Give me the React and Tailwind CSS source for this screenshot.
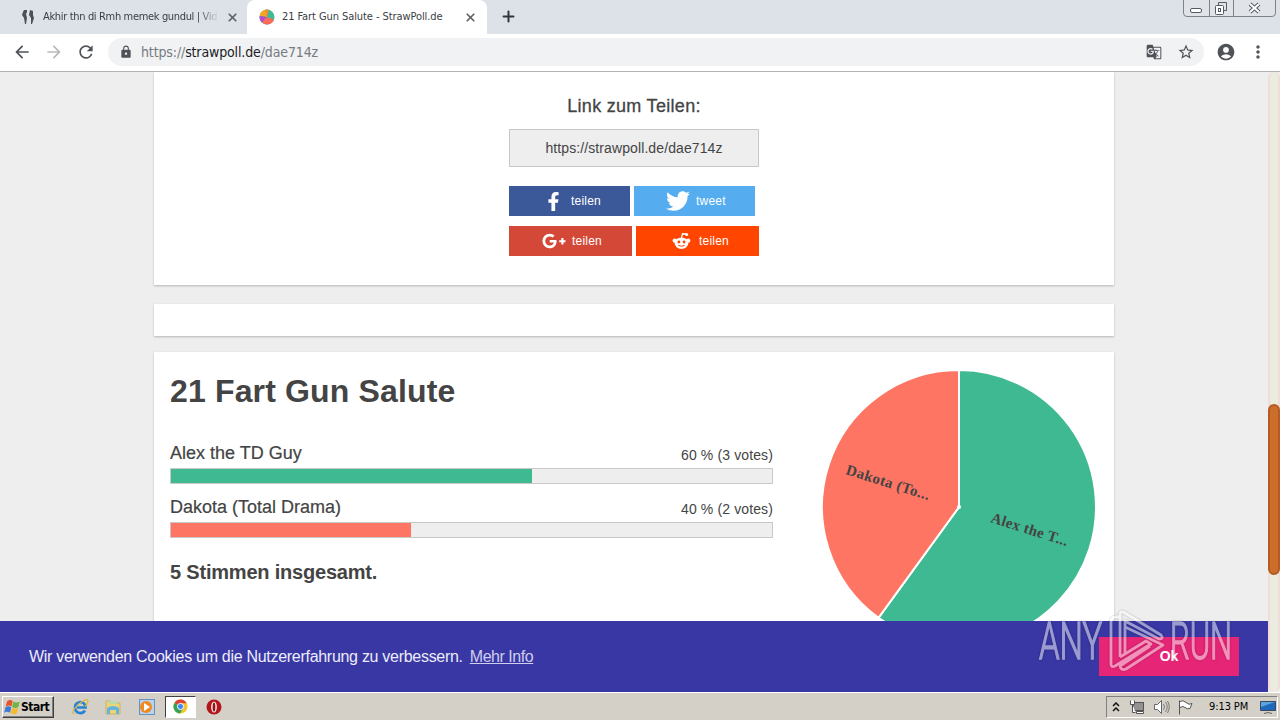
import React from "react";
import { X, Plus } from "lucide-react";
import { FaFacebookF, FaTwitter, FaGooglePlusG } from "react-icons/fa";
import { MdArrowBack, MdArrowForward, MdRefresh, MdLock, MdStarBorder, MdAccountCircle, MdMoreVert, MdGTranslate } from "react-icons/md";

const shareButtons = [
  { id: "fb", label: "teilen", Icon: FaFacebookF, size: 19, box: "w-[121px] bg-[#3b5998] pl-[33px]", iconBox: "w-[22px]", gap: "ml-[7px]" },
  { id: "tw", label: "tweet", Icon: FaTwitter, size: 24, box: "w-[121px] bg-[#55acee] pl-[32px]", iconBox: "w-[24px]", gap: "ml-[6px]" },
  { id: "gp", label: "teilen", Icon: FaGooglePlusG, size: 24, box: "w-[123px] bg-[#d34836] pl-[33px]", iconBox: "w-[24px]", gap: "ml-[6px]" },
  { id: "rd", label: "teilen", Icon: null, size: 19, box: "w-[123px] bg-[#ff4500] pl-[36px]", iconBox: "w-[19px]", gap: "ml-[8px]" },
];

const answers = [
  { name: "Alex the TD Guy", percent: 60, votes: 3, bar: "bg-[#3fb991]" },
  { name: "Dakota (Total Drama)", percent: 40, votes: 2, bar: "bg-[#fd7563]" },
];

const RedditIcon = () => (
  <svg width="19" height="18" viewBox="0 0 19 18" className="block">
    <path d="M9.5 6 10.5 1.800l3.500 .2" fill="none" stroke="#fff" strokeWidth="1.300" />
    <circle cx="14.600" cy="2.600" r="1.500" fill="#fff" />
    <circle cx="2.800" cy="8.600" r="2.200" fill="#fff" />
    <circle cx="16.200" cy="8.600" r="2.200" fill="#fff" />
    <ellipse cx="9.500" cy="11.200" rx="6.800" ry="5.800" fill="#fff" />
    <circle cx="6.900" cy="10" r="1.400" fill="#ff4500" />
    <circle cx="12.100" cy="10" r="1.400" fill="#ff4500" />
    <path d="M6.300 13.300q3.200 2 6.400 0" fill="none" stroke="#ff4500" strokeWidth="1" />
  </svg>
);

const WindowControls = () => (
  <svg width="94" height="18" viewBox="0 0 94 18" className="absolute right-[3px] top-0" fill="none">
    <path d="M.5 0v13q0 3.500 3.500 3.500h85q3.500 0 3.500-3.500V0" fill="#e0e3e8" stroke="#7d828b" />
    <path d="M26.500 0v16M50.500 0v16" stroke="#7d828b" />
    <rect x="7.500" y="8.500" width="11" height="4" rx="1.500" fill="#fff" stroke="#555b66" />
    <path d="M35.500 5.500v-3h8v8h-3" stroke="#555b66" />
    <rect x="32.500" y="5.500" width="8" height="9" rx="1" fill="#fff" stroke="#555b66" />
    <rect x="35.500" y="8.500" width="2" height="3" stroke="#555b66" />
    <path d="m67 4 9 8m0-8-9 8" stroke="#555b66" strokeWidth="4" />
    <path d="m67 4 9 8m0-8-9 8" stroke="#fff" strokeWidth="2" />
  </svg>
);

const PollFavicon = () => (
  <svg width="16" height="16" viewBox="0 0 16 16">
    <circle cx="8" cy="8" r="7.500" fill="#41b992" />
    <path d="M8 8 5 1.100A7.500 7.500 0 0 1 10 .7Z" fill="#f28b3c" />
    <path d="M8 8 .6 7A7.500 7.500 0 0 1 6 .8Z" fill="#f5a623" />
    <path d="M8 8 3 13.600A7.500 7.500 0 0 1 .6 7Z" fill="#b44bd0" />
    <path d="M8 8 15 10.700A7.500 7.500 0 0 1 3 13.600Z" fill="#fd6a5a" />
  </svg>
);

const TabStrip = () => (
  <div className="relative flex h-[34px] bg-[#dde1e8] text-[11px] text-[#3c4043]">
    <div className="flex w-[247px] items-center pl-[20px]">
      <svg width="16" height="16" viewBox="0 0 16 16" fill="#4b5058">
        <path d="M4 1h3v2L6 5l1 4-1 6H5L4 9 2 6l1-3ZM10 1l3 1v4l1 3-2 6h-1V9L9 6Z" />
      </svg>
      <div className="ml-[7px] w-[176px] overflow-hidden whitespace-nowrap pt-px tracking-[-0.34px] [mask-image:linear-gradient(to_right,black_88%,transparent)]">
        Akhir thn di Rmh memek gundul | Vid
      </div>
      <X size={13} strokeWidth={3.200} className="ml-[7px] text-[#5f6368]" />
    </div>
    <div className="flex w-[240px] items-center rounded-t-lg bg-white pl-[12px]">
      <PollFavicon />
      <div className="ml-[7px] w-[176px] whitespace-nowrap pt-px tracking-[-0.08px]">21 Fart Gun Salute - StrawPoll.de</div>
      <X size={13} strokeWidth={3.200} className="ml-[6px] text-[#5f6368]" />
    </div>
    <Plus size={17} strokeWidth={2.800} className="ml-[13px] mt-[8px] text-[#30343c]" />
    <WindowControls />
  </div>
);

const Toolbar = () => (
  <div className="flex h-[38px] items-center border-b border-[#b3b3b3] bg-white pb-px text-[#4f5357]">
    <MdArrowBack size={20} className="ml-[12px]" />
    <MdArrowForward size={20} className="ml-[12px] text-[#b8babd]" />
    <MdRefresh size={20} className="ml-[12px]" />
    <div className="ml-[12px] flex h-[28px] w-[1096px] items-center rounded-full bg-[#f0f2f4] pl-[11px]">
      <MdLock size={14} />
      <div className="ml-[8px] text-[14px] tracking-[-0.13px] text-[#777b80]">
        https://<span className="text-[#1c1d1f]">strawpoll.de</span>/dae714z
      </div>
      <MdGTranslate size={16} className="ml-auto" />
      <MdStarBorder size={18} className="ml-[15px] mr-[9px]" />
    </div>
    <MdAccountCircle size={20} className="ml-[12px]" />
    <MdMoreVert size={20} className="ml-[12px]" />
  </div>
);

const SharePanel = () => (
  <section className="flex h-[213px] flex-col items-center bg-white shadow-[0_1px_2px_rgba(0,0,0,0.24)]">
    <h3 className="mt-[23px] text-[18px] leading-[22px] tracking-[0.3px] [-webkit-text-stroke:0.3px_#444]">Link zum Teilen:</h3>
    <div className="mt-[12px] flex h-[38px] w-[250px] items-center justify-center border border-[#c8c8c8] bg-[#eee] text-[14px] tracking-[0.1px]">
      https://strawpoll.de/dae714z
    </div>
    <div className="mt-[19px] flex w-[250px] flex-wrap gap-x-1 gap-y-2.5">
      {shareButtons.map(({ id, label, Icon, size, box, iconBox, gap }) => (
        <button key={id} className={`flex h-[30px] items-center text-[12px] text-white ${box}`}>
          <span className={`flex justify-center ${iconBox}`}>{Icon ? <Icon size={size} /> : <RedditIcon />}</span>
          <span className={`${gap} tracking-[0.2px]`}>{label}</span>
        </button>
      ))}
    </div>
  </section>
);

const PieChart = () => (
  <svg width="278" height="278" viewBox="0 0 278 278" className="ml-[47px] mt-[16px] shrink-0">
    <g stroke="#fff" strokeWidth="2">
      <path d="M139 139V2A137 137 0 1 1 58.470 249.840Z" fill="#3fb991" />
      <path d="M139 139 58.470 249.840A137 137 0 0 1 139 2Z" fill="#ff7563" />
    </g>
    <circle cx="139" cy="139" r="2" fill="#fff" />
    <g fill="#444" fontFamily="Liberation Serif, serif" fontWeight="bold" fontSize="15">
      <text transform="translate(25 106) rotate(17.500)" textLength="87">Dakota (To...</text>
      <text transform="translate(170 154) rotate(17.500)" textLength="80">Alex the T...</text>
    </g>
  </svg>
);

const ResultPanel = () => (
  <section className="flex h-[340px] items-start bg-white pl-[16px] shadow-[0_1px_2px_rgba(0,0,0,0.24)]">
    <div className="w-[603px]">
      <h1 className="mt-[20px] text-[32px] font-bold leading-[38px] tracking-[0.15px]">21 Fart Gun Salute</h1>
      <div className="mt-[31px]">
        {answers.map((a) => (
          <div key={a.name} className="mb-[11px]">
            <div className="flex h-[27px] justify-between">
              <span className="text-[18px] leading-[24px] [-webkit-text-stroke:0.2px_#444]">{a.name}</span>
              <span className="text-[14px] leading-[28px] tracking-[0.12px]">
                {a.percent} % ({a.votes} votes)
              </span>
            </div>
            <div className="h-[16px] border border-[#c9c9c9] bg-[#eee]">
              <div className={`h-full ${a.bar}`} style={{ width: `${a.percent}%` }} />
            </div>
          </div>
        ))}
      </div>
      <h2 className="mt-[22px] text-[20px] font-bold leading-[24px] tracking-[-0.2px]">5 Stimmen insgesamt.</h2>
    </div>
    <PieChart />
  </section>
);

const Watermark = () => (
  <svg width="200" height="64" viewBox="0 0 200 64" className="pointer-events-none absolute bottom-[46px] right-[42px] opacity-50 drop-shadow-[0_0_1px_rgba(0,0,0,0.5)]">
    <g fill="#fff" stroke="#fff" strokeWidth="1.500" fontFamily="Roboto, sans-serif" fontWeight="300">
      <text transform="translate(1 49) scale(.62 1)" fontSize="52" textLength="102" lengthAdjust="spacingAndGlyphs">ANY</text>
      <text transform="translate(132 49) scale(.62 1)" fontSize="52" textLength="100" lengthAdjust="spacingAndGlyphs">RUN</text>
    </g>
    <g fill="none" stroke="#fff" strokeWidth="2.800" strokeLinejoin="round">
      <path d="M81 7q-8-1-8 5v42q0 4 4 2l36-22-5-3-26 16" />
      <path d="M82 47V5q0-5 5-2l36 22q3 4-2 4L87 11v32" />
      <path d="m87 17 38 18-37 24q-5 2-6-3l30-20" />
    </g>
  </svg>
);

const CookieBar = () => (
  <div className="absolute bottom-0 left-0 flex h-[71px] w-[1268px] items-center bg-[#3837a3] pl-[29px] pr-[29px] text-[16px] text-[#ececfa]">
    <span className="whitespace-nowrap tracking-[-0.29px]">Wir verwenden Cookies um die Nutzererfahrung zu verbessern.</span>
    <a className="ml-[7px] tracking-[-0.46px] text-[#cfceef] underline">Mehr Info</a>
    <button className="ml-auto h-[39px] w-[140px] bg-[#e62576] text-[14px] font-bold text-white">Ok</button>
  </div>
);

const Taskbar = () => (
  <footer className="flex h-[28px] items-center border-t border-white bg-[#d4d0c8] pl-[2px] text-[11px] text-black">
    <button className="flex h-[22px] w-[52px] items-center border border-b-[#404040] border-l-white border-r-[#404040] border-t-white pl-px font-bold shadow-[inset_-1px_-1px_#808080]">
      <svg width="16" height="16" viewBox="0 0 16 16">
        <path d="M3 2.500q3-2.500 5.700-.5L7.500 7.500q-3-2-5.800 0Z" fill="#e8532b" />
        <path d="M9.400 2.500q3 2 6.300 0L14.400 8q-3 2-6.200 0Z" fill="#72b443" />
        <path d="M1.500 8.300q3-2 5.800 0L6 13.800q-3-2-5.800 0Z" fill="#3d79d5" />
        <path d="M8 8.800q3 2 6.200 0L13 14.300q-3 2-6.200 0Z" fill="#f3ba29" />
      </svg>
      <span className="ml-px text-[12px] tracking-[-0.5px]">Start</span>
    </button>
    <svg width="18" height="18" viewBox="0 0 18 18" className="ml-[17px]">
      <path d="M14 12.500q-2 3-5.500 2.500Q4 14 4 9.500T9 4q5 0 5.500 5.500H6" fill="none" stroke="#2584d6" strokeWidth="2.700" />
      <path d="M3 16q-3-1 1-6T13 2.500q4-2 4 1-1 3-3 5" fill="none" stroke="#e2b635" strokeWidth="1.200" />
    </svg>
    <svg width="18" height="18" viewBox="0 0 18 18" className="ml-[15px]">
      <path d="M2 3h5l1 2h8v11H2Z" fill="#ead57b" stroke="#c5a942" strokeWidth=".7" />
      <path d="M5 3h8v3H5Z" fill="#b7dcaa" />
      <path d="M3 10q6-4 12 0v6h-3v-4H6v4H3Z" fill="#64b4df" />
    </svg>
    <svg width="18" height="18" viewBox="0 0 18 18" className="ml-[16px]">
      <rect x="1.500" y="1.500" width="15" height="15" fill="#b8d3ed" stroke="#6792bf" />
      <circle cx="8" cy="9" r="6" fill="#ef8a20" />
      <path d="m6 5 6 4-6 4Z" fill="#fff" />
    </svg>
    <div className="ml-[9px] flex h-[22px] w-[31px] items-center justify-center border border-b-white border-l-[#404040] border-r-white border-t-[#404040] bg-white">
      <svg width="15" height="15" viewBox="0 0 16 16">
        <circle cx="8" cy="8" r="7.500" fill="#f5c52e" />
        <path d="M8 8 1.500 4.200A7.500 7.500 0 0 1 14.600 4.500H8Z" fill="#db4437" />
        <path d="M1.500 4.200A7.500 7.500 0 0 0 7.500 15.500l3-5L8 8Z" fill="#35a353" />
        <circle cx="8" cy="8" r="3.300" fill="#4285f4" stroke="#fff" strokeWidth="1" />
      </svg>
    </div>
    <svg width="16" height="16" viewBox="0 0 16 16" className="ml-[10px]">
      <circle cx="8" cy="8" r="7.500" fill="#b3151b" />
      <ellipse cx="8" cy="8" rx="2.900" ry="5.500" fill="#f3e4e0" />
      <ellipse cx="8" cy="8" rx="1.300" ry="4.500" fill="#8d1115" />
    </svg>
    <div className="ml-auto mr-[2px] flex h-[22px] w-[172px] items-center border border-b-white border-l-[#808080] border-r-white border-t-[#808080] pl-[5px]">
      <svg width="8" height="10" viewBox="0 0 8 10" fill="none" stroke="#111" strokeWidth="1.500">
        <path d="m1 4 3-3 3 3M1 9l3-3 3 3" />
      </svg>
      <svg width="16" height="16" viewBox="0 0 16 16" className="ml-[9px]" fill="#fff" stroke="#555">
        <rect x="4.500" y="3.500" width="10" height="8" fill="#929292" />
        <path d="M7.500 14.500h7v-2h-7ZM1.500 1.500v4h4v-4M3.500 5v8.500h3" />
      </svg>
      <svg width="17" height="16" viewBox="0 0 17 16" className="ml-[8px]" fill="#fff" stroke="#666">
        <path d="M1.500 5.500h3l4-4v13l-4-4h-3Z" />
        <path d="M10.500 5q2 3 0 6M12.500 3q3.500 5 0 10M14.500 2q3.500 6 0 12" fill="none" strokeWidth=".8" />
      </svg>
      <svg width="17" height="16" viewBox="0 0 17 16" className="ml-[7px]" fill="#fff" stroke="#555">
        <path d="M2.500 15.500v-14M3 2.500q3-2 6 1t6 1l-2 5q-3 1-5-1t-5 0" />
      </svg>
      <span className="ml-[15px] whitespace-nowrap pt-px tracking-[-0.1px]">9:13 PM</span>
      <svg width="16" height="14" viewBox="0 0 16 14" className="ml-auto mr-px">
        <path d="M.5 1.500h15v9H.5Z" fill="#1f69bd" stroke="#37485f" />
        <path d="M1 2h14L1 7Z" fill="#5ca5df" />
        <path d="M4 13.500q4-2 8 0" stroke="#666" fill="#ccc" />
      </svg>
    </div>
  </footer>
);

export default function App() {
  return (
    <div className="relative flex h-[720px] w-[1280px] flex-col overflow-hidden font-['DejaVu_Sans_Condensed','DejaVu_Sans',sans-serif]">
      <TabStrip />
      <Toolbar />
      <main className="relative flex h-[620px] overflow-hidden bg-[#eee] font-['Liberation_Sans',Arial,sans-serif] text-[#444]">
        <div className="flex w-[1268px] flex-col items-center">
          <div className="w-[960px]">
            <SharePanel />
            <div className="mb-[16px] mt-[19px] h-[32px] bg-white shadow-[0_1px_2px_rgba(0,0,0,0.24)]" />
            <ResultPanel />
          </div>
        </div>
        <div className="w-[12px] rounded-full border-x-2 border-[#f1dcd8] bg-[#eaece0]">
          <div className="-mx-0.5 mt-[332px] h-[171px] rounded-full border-2 border-[#b55b22] bg-[#cb6d2b]" />
        </div>
        <CookieBar />
      </main>
      <Taskbar />
      <Watermark />
    </div>
  );
}
